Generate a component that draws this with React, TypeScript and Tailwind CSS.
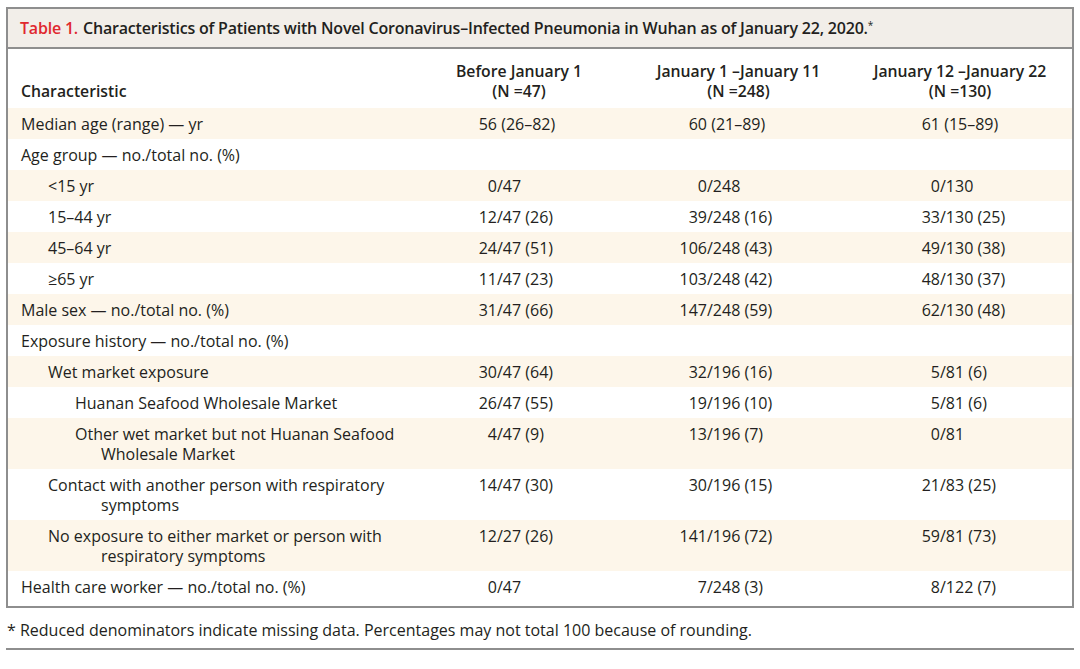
type Row = {
  label: string[]
  indent: 0 | 1 | 2
  values: string[]
}

const rows: Row[] = [
  { label: ['Median age (range) — yr'], indent: 0, values: ['56 (26–82)', '60 (21–89)', '61 (15–89)'] },
  { label: ['Age group — no./total no. (%)'], indent: 0, values: ['', '', ''] },
  { label: ['<15 yr'], indent: 1, values: ['0/47', '0/248', '0/130'] },
  { label: ['15–44 yr'], indent: 1, values: ['12/47 (26)', '39/248 (16)', '33/130 (25)'] },
  { label: ['45–64 yr'], indent: 1, values: ['24/47 (51)', '106/248 (43)', '49/130 (38)'] },
  { label: ['≥65 yr'], indent: 1, values: ['11/47 (23)', '103/248 (42)', '48/130 (37)'] },
  { label: ['Male sex — no./total no. (%)'], indent: 0, values: ['31/47 (66)', '147/248 (59)', '62/130 (48)'] },
  { label: ['Exposure history — no./total no. (%)'], indent: 0, values: ['', '', ''] },
  { label: ['Wet market exposure'], indent: 1, values: ['30/47 (64)', '32/196 (16)', '5/81 (6)'] },
  { label: ['Huanan Seafood Wholesale Market'], indent: 2, values: ['26/47 (55)', '19/196 (10)', '5/81 (6)'] },
  {
    label: ['Other wet market but not Huanan Seafood', 'Wholesale Market'],
    indent: 2,
    values: ['4/47 (9)', '13/196 (7)', '0/81']
  },
  {
    label: ['Contact with another person with respiratory', 'symptoms'],
    indent: 1,
    values: ['14/47 (30)', '30/196 (15)', '21/83 (25)']
  },
  {
    label: ['No exposure to either market or person with', 'respiratory symptoms'],
    indent: 1,
    values: ['12/27 (26)', '141/196 (72)', '59/81 (73)']
  },
  { label: ['Health care worker — no./total no. (%)'], indent: 0, values: ['0/47', '7/248 (3)', '8/122 (7)'] }
]

// pl puts the slash of every value in the column on the same x
const cols = [
  { title: 'Before January 1', n: '(N =47)', pad: 'pl-[60px]' },
  { title: 'January 1 –January 11', n: '(N =248)', pad: 'pl-[50px]' },
  { title: 'January 12 –January 22', n: '(N =130)', pad: 'pl-[64px]' }
]

const labelPad = ['pl-[13px]', 'pl-[40px]', 'pl-[67px]']
const hangPad = ['pl-[93px] indent-[-80px]', 'pl-[93px] indent-[-53px]', 'pl-[93px] indent-[-26px]']

function split(v: string) {
  const i = v.search(/[/ ]/)
  if (i < 0) return [v, '']
  return [v.slice(0, i), v.slice(i)]
}

function Cell({ value, col }: { value: string; col: number }) {
  if (!value) return <div />
  const [pre, rest] = split(value)
  return (
    <div className={`flex ${cols[col].pad}`}>
      <span className="w-[28px] shrink-0 text-right">{pre}</span>
      <span className="whitespace-pre">{rest}</span>
    </div>
  )
}

export default function App() {
  return (
    <div
      className="min-h-[669px] w-[1080px] bg-white pt-[7px] text-[#231f20]"
      style={{ fontFamily: '"Open Sans", Lato, sans-serif' }}
    >
      <div className="ml-[6px] w-[1068px] border-2 border-[#8e8e8e]">
        <div className="flex h-[40px] items-center border-b-2 border-[#8e8e8e] bg-[#f2eee9] pl-[12px] text-[16px] font-semibold tracking-[-0.2px]">
          <span className="text-[#e0282f]">Table 1.</span>
          <span className="ml-[5px]">
            Characteristics of Patients with Novel Coronavirus–Infected Pneumonia in Wuhan as of January 22, 2020.
            <sup className="text-[10px] font-normal">*</sup>
          </span>
        </div>

        <div className="grid grid-cols-[401px_220px_219px_224px] pt-[12px] pb-[7px] text-[15.75px] leading-[20px] font-semibold">
          <div className="flex items-end pl-[13px]">Characteristic</div>
          {cols.map(c => (
            <div key={c.title} className="text-center">
              <div>{c.title}</div>
              <div>{c.n}</div>
            </div>
          ))}
        </div>

        <div className="text-[16px] leading-[20px]">
          {rows.map((r, i) => (
            <div
              key={r.label[0]}
              className={`grid grid-cols-[401px_220px_219px_224px] pt-[6px] ${
                i === rows.length - 1 ? 'pb-[9px]' : 'pb-[5px]'
              } ${i % 2 === 0 ? 'bg-[#fdf6ea]' : 'bg-white'}`}
            >
              <div className={r.label.length > 1 ? hangPad[r.indent] : labelPad[r.indent]}>
                {r.label.map((l, j) => (
                  <span key={l}>
                    {j > 0 && <br />}
                    {l}
                  </span>
                ))}
              </div>
              {r.values.map((v, j) => (
                <Cell key={j} value={v} col={j} />
              ))}
            </div>
          ))}
        </div>
      </div>

      <div className="ml-[6px] w-[1068px] border-b-2 border-[#8e8e8e] pt-[11px] pb-[7px] pl-[1px] text-[16px] leading-[22px]">
        * Reduced denominators indicate missing data. Percentages may not total 100 because of rounding.
      </div>
    </div>
  )
}
